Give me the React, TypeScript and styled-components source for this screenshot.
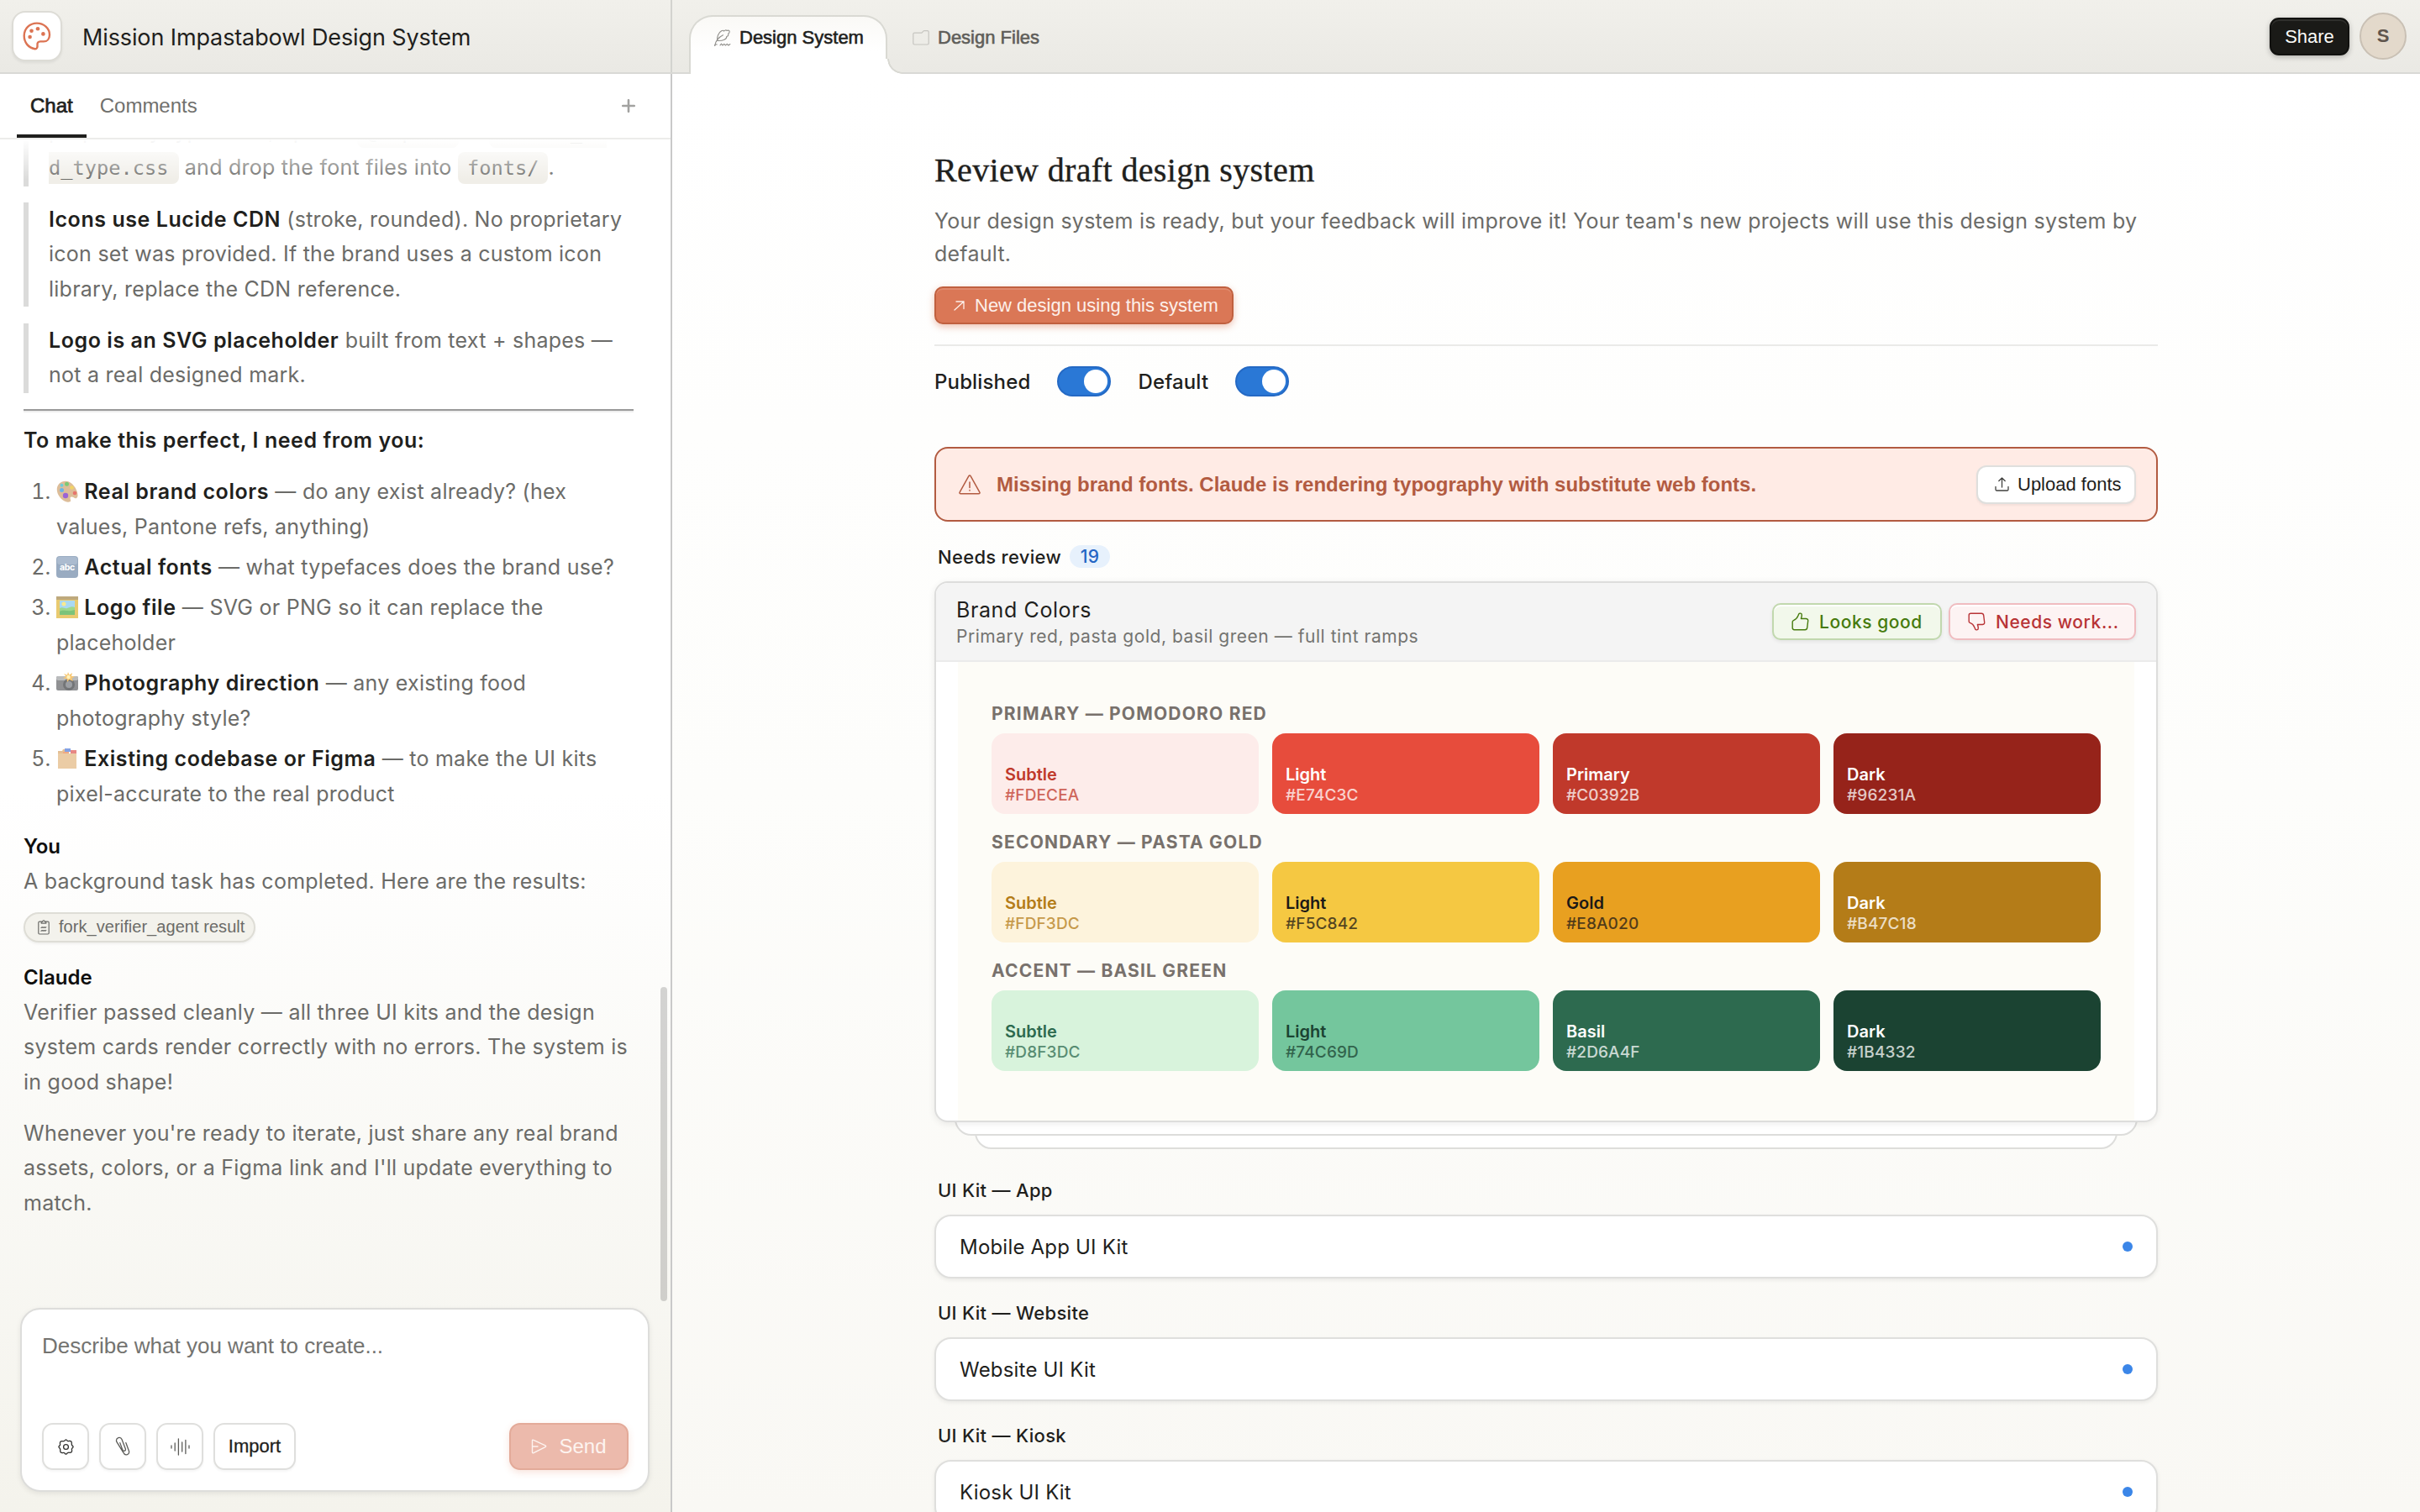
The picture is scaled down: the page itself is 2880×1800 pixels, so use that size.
import React from 'react';
import styled, { createGlobalStyle } from 'styled-components';

const brandRamps = [
  {
    label: 'PRIMARY — POMODORO RED',
    swatches: [
      { name: 'Subtle', hex: '#FDECEA', color: '#c0392b' },
      { name: 'Light', hex: '#E74C3C', color: '#ffffff' },
      { name: 'Primary', hex: '#C0392B', color: '#ffffff' },
      { name: 'Dark', hex: '#96231A', color: '#ffffff' },
    ],
  },
  {
    label: 'SECONDARY — PASTA GOLD',
    swatches: [
      { name: 'Subtle', hex: '#FDF3DC', color: '#b47c18' },
      { name: 'Light', hex: '#F5C842', color: '#1c1917' },
      { name: 'Gold', hex: '#E8A020', color: '#1c1917' },
      { name: 'Dark', hex: '#B47C18', color: '#ffffff' },
    ],
  },
  {
    label: 'ACCENT — BASIL GREEN',
    swatches: [
      { name: 'Subtle', hex: '#D8F3DC', color: '#2d6a4f' },
      { name: 'Light', hex: '#74C69D', color: '#1b4332' },
      { name: 'Basil', hex: '#2D6A4F', color: '#ffffff' },
      { name: 'Dark', hex: '#1B4332', color: '#ffffff' },
    ],
  },
];

const kits = [
  { section: 'UI Kit — App', name: 'Mobile App UI Kit' },
  { section: 'UI Kit — Website', name: 'Website UI Kit' },
  { section: 'UI Kit — Kiosk', name: 'Kiosk UI Kit' },
];

const PaletteIcon = () => (
  <svg width="34" height="34" viewBox="0 0 34 34" fill="none" stroke="#dc7453" strokeWidth="2.4" strokeLinejoin="round">
    <path d="M14.6 32.2C6.6 31 1.7 24.4 1.7 16.6 1.7 8 8.3 1.6 16.8 1.6c8.4 0 15.2 6.2 15.2 13.8 0 5-3 8-7 8h-4c-2.6 0-3.8 1.6-3.5 4 .3 2.9-.6 5-2.9 4.8z" />
    <g fill="#dc7453" stroke="none">
      <circle cx="8.6" cy="18" r="2.3" />
      <circle cx="10.5" cy="10.8" r="2.3" />
      <circle cx="18" cy="8.3" r="2.3" />
      <circle cx="24.4" cy="14.4" r="2.3" />
    </g>
  </svg>
);

const QuillIcon = () => (
  <svg width="20" height="20" viewBox="0 0 20 20" fill="none" stroke="#8f8e8a" strokeWidth="1.1" strokeLinecap="round" strokeLinejoin="round">
    <path d="M.6 19.4C1.6 14.5 5 9.5 10.5 6.8" />
    <path d="M3.8 13.4C2.8 9 5 3.8 9 1.6c1-.6 1.8-.6 2.4.5C12.6.9 14 .4 15 1.5c1.6-.9 3.3-.2 3.2 1.3-.1 1.4-.8 2-1.6 2.5.6 1.3 0 2.7-1.8 3.2C15 11.5 10.6 13.8 3.8 13.4z" />
    <path d="M.8 19.2c.6-1.6 1.6-1.7 2.4-1.2M7 18.8l1.5-1.6 1.4 1.8 1.9-1.7 1.5 1.7 2-1.7 1.6 1.7 2-1.5" />
  </svg>
);

const FolderIcon = () => (
  <svg width="20" height="18" viewBox="0 0 20 18" fill="none" stroke="#c6c5c0" strokeWidth="1.2" strokeLinejoin="round">
    <path d="M.8 4.6c0-.9.5-1.4 1.4-1.4H11L12.8 1.2c.3-.4.6-.5 1-.5h4c.9 0 1.4.5 1.4 1.4v13.5c0 .9-.5 1.4-1.4 1.4H2.2c-.9 0-1.4-.5-1.4-1.4z" />
  </svg>
);

const PlusIcon = () => (
  <svg width="16" height="16" viewBox="0 0 16 16" stroke="#a2a2a0" strokeWidth="2.6" strokeLinecap="round">
    <path d="M8 1.2v13.6M1.2 8h13.6" />
  </svg>
);

const ClipboardIcon = () => (
  <svg width="14" height="18" viewBox="0 0 14 18" fill="none" stroke="#6b6b68" strokeWidth="1.2" strokeLinejoin="round" strokeLinecap="round">
    <path d="M4.2 2.2H2C1.2 2.2.8 2.6.8 3.4v12.4c0 .8.4 1.2 1.2 1.2h10c.8 0 1.2-.4 1.2-1.2V3.4c0-.8-.4-1.2-1.2-1.2H9.8" />
    <path d="M4.2 4.2V2.4h1.4C5.7 1.3 6.2.8 7 .8s1.3.5 1.4 1.6h1.4v1.8z" />
    <path d="M4 9.5l1.2-.8 1 .8 1.3-.8 1 .8 1.3-.8M4 13.3l1.2-.8 1 .8 1.3-.8 1 .8 1.3-.8" />
  </svg>
);

const GearIcon = () => (
  <svg width="19" height="19" viewBox="0 0 19 19" fill="none" stroke="#30302e" strokeWidth="1.3" strokeLinejoin="round">
    <circle cx="9.5" cy="9.5" r="2.9" />
    <path d="M7.9 2.2Q9.5-.4 11.1 2.2Q12.3 3 13.5 2.4Q16.5 2.2 16.3 5.2Q16 6.5 16.8 7.9Q19.4 9.5 16.8 11.1Q16 12.3 16.6 13.5Q16.8 16.5 13.8 16.3Q12.5 16 11.1 16.8Q9.5 19.4 7.9 16.8Q6.7 16 5.5 16.6Q2.5 16.8 2.7 13.8Q3 12.5 2.2 11.1Q-.4 9.5 2.2 7.9Q3 6.7 2.4 5.5Q2.2 2.5 5.2 2.7Q6.5 3 7.9 2.2z" />
  </svg>
);

const ClipIcon = () => (
  <svg width="18" height="24" viewBox="0 0 18 24" fill="none" stroke="#5c5c59" strokeWidth="1.3" strokeLinecap="round">
    <path d="M12.8 7.6l3.5 9.3c1.7 4.6-4.6 7-6.4 2.4L1.7 6.2C.4 1.7 6.4-.4 8 3.6l4.3 11.2c.9 2.4-2.5 3.6-3.4 1.3L5.8 7.6" />
  </svg>
);

const WaveIcon = () => (
  <svg width="23" height="21" viewBox="0 0 23 21" stroke="#5c5c59" strokeWidth="1.3" strokeLinecap="round">
    <path d="M1 9v3M5.2 6v9M9.4 1v19M13.7 5v11M17.9 2.5v16M22 9v3" />
  </svg>
);

const SendIcon = () => (
  <svg width="19" height="18" viewBox="0 0 19 18" fill="none" stroke="#fdf4f0" strokeWidth="1.4" strokeLinejoin="round" strokeLinecap="round">
    <path d="M1.5 2.2c0-1 .7-1.3 1.5-.9l14 6.6c.9.5.9 1.2 0 1.7L3 16.7c-.8.4-1.5 0-1.5-.9zM1.8 9H8" />
  </svg>
);

const ArrowIcon = () => (
  <svg width="13" height="12" viewBox="0 0 13 12" fill="none" stroke="#fdf0ea" strokeWidth="1.3" strokeLinecap="round" strokeLinejoin="round">
    <path d="M1 11L12 1M3 1h9v8.5" />
  </svg>
);

const WarningIcon = () => (
  <svg width="26" height="24" viewBox="0 0 26 24" fill="none" stroke="#b25b41" strokeWidth="1.5" strokeLinecap="round" strokeLinejoin="round">
    <path d="M11.8 1.8c.6-1 1.8-1 2.4 0l10.6 19c.6 1 .1 1.9-1.1 1.9H2.3c-1.2 0-1.7-.9-1.1-1.9zM13 9v6.5M13 18.6v.3" />
  </svg>
);

const UploadIcon = () => (
  <svg width="17" height="17" viewBox="0 0 17 17" fill="none" stroke="#40403e" strokeWidth="1.3" strokeLinecap="round" strokeLinejoin="round">
    <path d="M8.5 12V1M4.8 4.5L8.5 1l3.7 3.5M1 11.5v3.2c0 .9.4 1.3 1.3 1.3h12.4c.9 0 1.3-.4 1.3-1.3v-3.2" />
  </svg>
);

const ThumbIcon = ({ flipped = false }: { flipped?: boolean }) => (
  <svg width="21" height="22" viewBox="0 0 21 22" fill="none" stroke="currentColor" strokeWidth="1.4" strokeLinejoin="round" strokeLinecap="round">
    <path
      transform={flipped ? 'matrix(1 0 0 -1 0 22)' : undefined}
      d="M1.2 11.2c0-.9.4-1.3 1.2-1.6 2.3-.8 4.3-2.7 5.4-5.3l.9-2.2c.6-1.3 3.7-1.6 3.6 1.2 0 1.5-.5 2.9-.9 4.2h5.8c1.7 0 2.7 1 2.5 2.5l-1 8.3c-.2 1.6-1 2.4-2.5 2.4H3.4c-1.5 0-2.2-.7-2.2-2.1z"
    />
  </svg>
);

const EmojiPalette = () => (
  <Emoji viewBox="0 0 26 26">
    <path d="M7 1.5c6-2.5 12 1 15.5 7 3.3 5.5 4 11 1.6 12.4-2.3 1.3-4.3-2.4-6.8-1.2-2.3 1.2 1.3 4.3-1 5.5C12 27 5.5 23 2.4 17-.8 10.7.8 4 7 1.5z" fill="#d2a877" />
    <circle cx="6.5" cy="11.5" r="2.5" fill="#3c9be0" />
    <circle cx="6.5" cy="5.8" r="2" fill="#3cbcd2" />
    <circle cx="12.5" cy="4.2" r="2.5" fill="#54b848" />
    <circle cx="18.5" cy="8.5" r="2.3" fill="#edc531" />
    <circle cx="22" cy="15" r="2.3" fill="#e0483e" />
    <circle cx="11" cy="18" r="3.2" fill="#7a2fc8" />
  </Emoji>
);

const EmojiAbc = () => (
  <Emoji viewBox="0 0 26 26">
    <rect x="0" y="0" width="26" height="26" rx="4" fill="#7890ad" />
    <rect x="1" y="1" width="24" height="9" rx="3" fill="#8fa5bf" />
    <text x="13" y="16.5" textAnchor="middle" fontSize="10.5" fontWeight="700" letterSpacing="-0.3" fontFamily="Inter, sans-serif" fill="#fff">
      abc
    </text>
  </Emoji>
);

const EmojiPicture = () => (
  <Emoji viewBox="0 0 26 26">
    <rect width="26" height="26" fill="#e2b93f" />
    <rect width="26" height="4" fill="#a98d52" />
    <rect x="4" y="5" width="18" height="17" fill="#8ecdf0" />
    <circle cx="9" cy="9" r="2.5" fill="#f7e36b" />
    <path d="M4 14c4-2 6 1 9 0s5-3 9-1v9H4z" fill="#7dcb67" />
    <path d="M4 18c5-3 9 1 18-2v6H4z" fill="#4faf4e" />
  </Emoji>
);

const EmojiCamera = () => (
  <Emoji viewBox="0 0 26 26">
    <rect x="0" y="5" width="26" height="17" rx="2" fill="#6b6d70" />
    <rect x="0" y="5" width="26" height="5" rx="2" fill="#a4a6a8" />
    <circle cx="15" cy="15" r="7" fill="#45474a" />
    <circle cx="15" cy="15" r="4" fill="#7c8085" />
    <path d="M14 0l1.5 3.5L19 1l-1 4 4 .5-3.5 2L20 11l-4.5-2L13 12l-.5-4L8 7.5l3.5-2.2L9 2l4 1.5z" fill="#f6b545" />
    <circle cx="14.5" cy="6" r="2.2" fill="#fff0a8" />
  </Emoji>
);

const EmojiDividers = () => (
  <Emoji viewBox="0 0 26 26">
    <path d="M2 4h5l1-2h3v5h13v17H2z" fill="#dcab72" />
    <path d="M10 1h7v4h-7z" fill="#5b84dc" />
    <path d="M17 3h7v4h-7z" fill="#e0605c" />
    <path d="M8 5h7v3H8z" fill="#e98d5b" />
    <path d="M2 7h22v18H2z" fill="#e5bb88" />
  </Emoji>
);

const App = () => {
  return (
    <Page>
      <GlobalStyle />
      <TopBar>
        <ProjectBar>
          <LogoButton>
            <PaletteIcon />
          </LogoButton>
          <ProjectName>Mission Impastabowl Design System</ProjectName>
        </ProjectBar>
        <FileTabs>
          <ActiveFileTab>
            <QuillIcon />
            Design System
          </ActiveFileTab>
          <FileTab>
            <FolderIcon />
            Design Files
          </FileTab>
        </FileTabs>
        <ShareButton>Share</ShareButton>
        <Avatar>S</Avatar>
      </TopBar>
      <Body>
        <Sidebar>
          <SidebarTabs>
            <SidebarTab $active>Chat</SidebarTab>
            <SidebarTab>Comments</SidebarTab>
            <AddButton>
              <PlusIcon />
            </AddButton>
          </SidebarTabs>
          <Messages>
            <Quote>
              proprietary typefaces, update <Code>@import</Code> in <Code $side="start">colors_an</Code>
              <br />
              <Code $side="end">d_type.css</Code> and drop the font files into <Code>fonts/</Code>.
            </Quote>
            <Quote>
              <Strong>Icons use Lucide CDN</Strong> (stroke, rounded). No proprietary
              <br />
              icon set was provided. If the brand uses a custom icon
              <br />
              library, replace the CDN reference.
            </Quote>
            <Quote>
              <Strong>Logo is an SVG placeholder</Strong> built from text + shapes —
              <br />
              not a real designed mark.
            </Quote>
            <Rule />
            <Paragraph>
              <Strong>To make this perfect, I need from you:</Strong>
            </Paragraph>
            <Requests>
              <li>
                <EmojiPalette /> <Strong>Real brand colors</Strong> — do any exist already? (hex
                <br />
                values, Pantone refs, anything)
              </li>
              <li>
                <EmojiAbc /> <Strong>Actual fonts</Strong> — what typefaces does the brand use?
              </li>
              <li>
                <EmojiPicture /> <Strong>Logo file</Strong> — SVG or PNG so it can replace the
                <br />
                placeholder
              </li>
              <li>
                <EmojiCamera /> <Strong>Photography direction</Strong> — any existing food
                <br />
                photography style?
              </li>
              <li>
                <EmojiDividers /> <Strong>Existing codebase or Figma</Strong> — to make the UI kits
                <br />
                pixel-accurate to the real product
              </li>
            </Requests>
            <Author>You</Author>
            <Paragraph>A background task has completed. Here are the results:</Paragraph>
            <ResultChip>
              <ClipboardIcon />
              fork_verifier_agent result
            </ResultChip>
            <Author>Claude</Author>
            <Paragraph>
              Verifier passed cleanly — all three UI kits and the design
              <br />
              system cards render correctly with no errors. The system is
              <br />
              in good shape!
            </Paragraph>
            <Paragraph $spaced>
              Whenever you're ready to iterate, just share any real brand
              <br />
              assets, colors, or a Figma link and I'll update everything to
              <br />
              match.
            </Paragraph>
            <TopFade />
            <ScrollThumb />
          </Messages>
          <Composer>
            <Placeholder>Describe what you want to create...</Placeholder>
            <ComposerActions>
              <ToolButton>
                <GearIcon />
              </ToolButton>
              <ToolButton>
                <ClipIcon />
              </ToolButton>
              <ToolButton>
                <WaveIcon />
              </ToolButton>
              <ImportButton>Import</ImportButton>
              <SendButton>
                <SendIcon />
                Send
              </SendButton>
            </ComposerActions>
          </Composer>
        </Sidebar>
        <Main>
          <Content>
            <Title>Review draft design system</Title>
            <Intro>
              Your design system is ready, but your feedback will improve it! Your team's new projects will use this design system by
              <br />
              default.
            </Intro>
            <NewDesignButton>
              <ArrowIcon />
              New design using this system
            </NewDesignButton>
            <Divider />
            <Toggles>
              <ToggleLabel>Published</ToggleLabel>
              <Toggle />
              <ToggleLabel>Default</ToggleLabel>
              <Toggle />
            </Toggles>
            <Alert>
              <WarningIcon />
              <AlertText>Missing brand fonts. Claude is rendering typography with substitute web fonts.</AlertText>
              <UploadButton>
                <UploadIcon />
                Upload fonts
              </UploadButton>
            </Alert>
            <ReviewHeading>
              Needs review
              <Count>19</Count>
            </ReviewHeading>
            <Stack>
              <ReviewCard>
                <CardHeader>
                  <div>
                    <CardTitle>Brand Colors</CardTitle>
                    <CardSubtitle>Primary red, pasta gold, basil green — full tint ramps</CardSubtitle>
                  </div>
                  <ReviewButtons>
                    <ReviewButton $tone="good">
                      <ThumbIcon />
                      Looks good
                    </ReviewButton>
                    <ReviewButton $tone="bad">
                      <ThumbIcon flipped />
                      Needs work...
                    </ReviewButton>
                  </ReviewButtons>
                </CardHeader>
                <Preview>
                  {brandRamps.map((ramp) => (
                    <Ramp key={ramp.label}>
                      <RampLabel>{ramp.label}</RampLabel>
                      <Swatches>
                        {ramp.swatches.map((swatch) => (
                          <Swatch key={swatch.hex} $bg={swatch.hex} $color={swatch.color}>
                            <SwatchName>{swatch.name}</SwatchName>
                            <SwatchHex>{swatch.hex}</SwatchHex>
                          </Swatch>
                        ))}
                      </Swatches>
                    </Ramp>
                  ))}
                </Preview>
              </ReviewCard>
              <StackLayer $inset={24} $depth={1} />
              <StackLayer $inset={48} $depth={2} />
            </Stack>
            {kits.map((kit) => (
              <Kit key={kit.name}>
                <KitSection>{kit.section}</KitSection>
                <KitCard>
                  {kit.name}
                  <Dot />
                </KitCard>
              </Kit>
            ))}
          </Content>
        </Main>
      </Body>
    </Page>
  );
};

export default App;

const GlobalStyle = createGlobalStyle`
  * {
    box-sizing: border-box;
  }
  body {
    margin: 0;
    overflow: hidden;
    font-family: Inter, 'Liberation Sans', sans-serif;
    color: #1f1f1d;
  }
  svg {
    flex-shrink: 0;
  }
  button {
    margin: 0;
    padding: 0;
    background: none;
    border: none;
  }
`;

const Page = styled.div`
  display: flex;
  flex-direction: column;
  width: 100vw;
  height: 100vh;
  overflow: hidden;
  white-space: nowrap;
`;

const TopBar = styled.header`
  display: flex;
  align-items: center;
  flex-shrink: 0;
  height: 88px;
  padding-right: 16px;
  border-bottom: 2px solid #d9d9d5;
  background: linear-gradient(to bottom, #f1f0eb, #eae9e4);
`;

const ProjectBar = styled.div`
  display: flex;
  align-items: center;
  width: 800px;
  height: 86px;
  padding-left: 14px;
  border-right: 2px solid #d3d3cf;
`;

const LogoButton = styled.button`
  display: flex;
  align-items: center;
  justify-content: center;
  width: 60px;
  height: 60px;
  border: 2px solid #dddcd6;
  border-radius: 16px;
  background: #fff;
  box-shadow: 0 2px 3px rgba(0, 0, 0, 0.06);
`;

const ProjectName = styled.div`
  margin: 2px 0 0 24px;
  font-size: 27px;
  letter-spacing: -0.12px;
`;

const FileTabs = styled.nav`
  display: flex;
  align-self: flex-end;
  flex: 1;
  height: 70px;
  margin: 0 0 -2px 20px;
`;

const FileTab = styled.div`
  display: flex;
  align-items: center;
  gap: 10px;
  height: 53px;
  padding-left: 30px;
  font-family: 'Liberation Sans', sans-serif;
  font-size: 22px;
  color: #5f5e5a;
  -webkit-text-stroke: 0.6px currentColor;
`;

const ActiveFileTab = styled(FileTab)`
  position: relative;
  width: 236px;
  height: 70px;
  padding: 0 0 18px 28px;
  border: 2px solid #d9d9d3;
  border-bottom: none;
  border-radius: 28px 28px 0 0;
  background: linear-gradient(to bottom, #faf9f6, #fff 60%);
  color: #1f1f1d;

  /* covers the side border so the corner below can curve outward */
  &::before {
    content: '';
    position: absolute;
    right: -2px;
    bottom: 0;
    width: 2px;
    height: 18px;
    background: #fff;
  }
  &::after {
    content: '';
    position: absolute;
    right: -20px;
    bottom: 0;
    width: 20px;
    height: 18px;
    background: radial-gradient(circle at 100% 0, #ebeae5 0, #ebeae5 15.5px, #d9d9d3 16px, #d9d9d3 17.5px, #fff 18px);
  }
`;

const ShareButton = styled.button`
  width: 95px;
  height: 45px;
  margin-right: 12px;
  padding-top: 2px;
  border: 2px solid #11110f;
  border-radius: 11px;
  background: #1a1a17;
  box-shadow: 0 2px 6px rgba(0, 0, 0, 0.25), inset 0 2px 0 #2f2f2c;
  font-family: 'Liberation Sans', sans-serif;
  font-size: 22px;
  color: #fafaf7;
`;

const Avatar = styled.div`
  display: flex;
  align-items: center;
  justify-content: center;
  width: 56px;
  height: 56px;
  border: 2px solid #c9c0b4;
  border-radius: 50%;
  background: #e3d9cb;
  font-family: 'Liberation Sans', sans-serif;
  font-size: 22px;
  font-weight: 700;
  color: #5f554d;
`;

const Body = styled.div`
  display: flex;
  flex: 1;
  min-height: 0;
`;

const Sidebar = styled.aside`
  display: flex;
  flex-direction: column;
  width: 800px;
  flex-shrink: 0;
  border-right: 2px solid #c9c9c9;
  background: linear-gradient(to bottom, #fff 0, #fff 50%, #f4f3ec 100%);
`;

const SidebarTabs = styled.div`
  display: flex;
  flex-shrink: 0;
  height: 78px;
  padding: 0 42px 0 20px;
  border-bottom: 2px solid #ececea;
`;

const SidebarTab = styled.div<{ $active?: boolean }>`
  display: flex;
  align-items: center;
  height: 76px;
  padding: 0 16px;
  font-family: 'Liberation Sans', sans-serif;
  font-size: 24px;
  color: ${({ $active }) => ($active ? '#1f1f1d' : '#70706d')};
  box-shadow: ${({ $active }) => ($active ? 'inset 0 -4px 0 #1f1f1d' : 'none')};
  -webkit-text-stroke: ${({ $active }) => ($active ? '0.7px currentColor' : '0')};
`;

const AddButton = styled.button`
  display: flex;
  align-items: center;
  margin-left: auto;
`;

const Messages = styled.div`
  position: relative;
  flex: 1;
  min-height: 0;
  padding-left: 28px;
  overflow: hidden;
  font-size: 25px;
  line-height: 41.6px;
  letter-spacing: 0.25px;
  color: #6b6b68;
`;

const Quote = styled.div`
  margin: 0 0 19.2px;
  padding-left: 24px;
  border-left: 6px solid #dbdbda;

  &:first-child {
    margin-top: -29.7px;
  }
`;

const Strong = styled.strong`
  font-weight: 600;
  letter-spacing: 0.56px;
  color: #1f1f1d;
`;

const Code = styled.code<{ $side?: 'start' | 'end' }>`
  padding: ${({ $side }) => ($side === 'end' ? '5px 12px 5px 0' : $side === 'start' ? '5px 0 5px 11px' : '5px 11px')};
  border-radius: ${({ $side }) => ($side === 'end' ? '0 8px 8px 0' : $side === 'start' ? '8px 0 0 8px' : '8px')};
  background: #f0eee8;
  font-family: 'DejaVu Sans Mono', 'Liberation Mono', monospace;
  font-size: 23.6px;
  letter-spacing: 0.05px;
`;

const Rule = styled.div`
  width: 726px;
  height: 4px;
  margin: 0 0 13px;
  border-top: 2px solid #9a9a9a;
  border-bottom: 2px solid #eeeeee;
`;

const Paragraph = styled.p<{ $spaced?: boolean }>`
  margin: ${({ $spaced }) => ($spaced ? '19.2px 0 0' : '0')};
`;

const Requests = styled.ol`
  display: flex;
  flex-direction: column;
  gap: 6.7px;
  margin: 19.4px 0 0;
  padding-left: 39px;

  li::marker {
    letter-spacing: 0;
  }
`;

const Emoji = styled.svg`
  width: 26px;
  height: 26px;
  vertical-align: -4px;
  opacity: 0.75;
`;

const Author = styled.div`
  margin: 27px 0 6px;
  font-size: 24px;
  font-weight: 600;
  line-height: 30px;
  letter-spacing: 0;
  color: #0f0f0e;
`;

const ResultChip = styled.div`
  display: flex;
  align-items: center;
  gap: 11px;
  width: 276px;
  height: 36px;
  margin-top: 15px;
  padding-left: 15px;
  border: 2px solid #deddd6;
  border-radius: 18px;
  background: #f3f2ec;
  box-shadow: 0 2px 3px rgba(0, 0, 0, 0.05);
  font-family: 'Liberation Sans', sans-serif;
  font-size: 20px;
  letter-spacing: 0.05px;
`;

const TopFade = styled.div`
  position: absolute;
  top: 0;
  left: 0;
  width: 780px;
  height: 48px;
  background: linear-gradient(to bottom, #fff, rgba(255, 255, 255, 0));
`;

const ScrollThumb = styled.div`
  position: absolute;
  top: 1009px;
  right: 4px;
  width: 8px;
  height: 374px;
  border-radius: 4px;
  background: rgba(0, 0, 0, 0.16);
`;

const Composer = styled.div`
  display: flex;
  flex-direction: column;
  justify-content: space-between;
  flex-shrink: 0;
  width: 749px;
  height: 219px;
  margin: 4px 0 24px 24px;
  padding: 26px 23px 24px 24px;
  border: 2px solid #dddddb;
  border-radius: 24px;
  background: #fff;
  box-shadow: 0 2px 6px rgba(0, 0, 0, 0.08);
`;

const Placeholder = styled.div`
  font-family: 'Liberation Sans', sans-serif;
  font-size: 26px;
  line-height: 34px;
  color: #737370;
`;

const ComposerActions = styled.div`
  display: flex;
  gap: 12px;
`;

const ToolButton = styled.button`
  display: flex;
  align-items: center;
  justify-content: center;
  width: 56px;
  height: 56px;
  border: 2px solid #dfdfdd;
  border-radius: 13px;
  background: #fff;
  box-shadow: 0 2px 3px rgba(0, 0, 0, 0.04);
`;

const ImportButton = styled(ToolButton)`
  width: 98px;
  font-family: 'Liberation Sans', sans-serif;
  font-size: 22px;
  color: #1f1f1d;
  -webkit-text-stroke: 0.3px currentColor;
`;

const SendButton = styled(ToolButton)`
  gap: 14px;
  width: 142px;
  margin-left: auto;
  border-color: #e3aa99;
  background: #ecbaac;
  box-shadow: 0 3px 8px rgba(218, 119, 86, 0.2);
  font-family: 'Liberation Sans', sans-serif;
  font-size: 24px;
  color: #fdf4f0;
`;

const Main = styled.main`
  flex: 1;
  padding: 91px 0 0 312px;
  overflow: hidden;
  background: linear-gradient(to bottom, #fff 0, #fdfdfb 50%, #f9f8f4 100%);
`;

const Content = styled.div`
  width: 1456px;
`;

const Title = styled.h1`
  margin: 0;
  font-family: 'Liberation Serif', serif;
  font-size: 40px;
  font-weight: 400;
  line-height: 48px;
  letter-spacing: 0.36px;
  -webkit-text-stroke: 0.4px currentColor;
`;

const Intro = styled.p`
  margin: 17px 0 0;
  font-size: 25px;
  line-height: 39.2px;
  letter-spacing: 0.24px;
  color: #6b6b68;
`;

const NewDesignButton = styled.button`
  display: flex;
  align-items: center;
  gap: 12px;
  width: 356px;
  height: 45px;
  margin-top: 18.6px;
  padding-left: 21px;
  border: 2px solid #c0603f;
  border-radius: 10px;
  background: #da7756;
  box-shadow: 0 3px 8px rgba(218, 119, 86, 0.45), inset 0 2px 0 #e08a6d;
  font-family: 'Liberation Sans', sans-serif;
  font-size: 22px;
  color: #fdf0ea;
`;

const Divider = styled.div`
  height: 2px;
  margin: 24px 0;
  background: #eaeae8;
`;

const Toggles = styled.div`
  display: flex;
  align-items: center;
  gap: 32px;
  height: 36px;
`;

const ToggleLabel = styled.span`
  font-size: 24px;
  font-weight: 500;
  letter-spacing: 0.15px;
`;

const Toggle = styled.span`
  display: flex;
  justify-content: flex-end;
  width: 64px;
  height: 36px;
  padding: 2px;
  border: 2px solid #2469c4;
  border-radius: 18px;
  background: #2a78d6;

  &::before {
    content: '';
    width: 28px;
    height: 28px;
    border-radius: 50%;
    background: #fff;
  }
`;

const Alert = styled.div`
  display: flex;
  align-items: center;
  height: 89px;
  margin-top: 60px;
  padding: 0 24px 0 27px;
  border: 2px solid #b25b41;
  border-radius: 16px;
  background: #ffebe5;
`;

const AlertText = styled.div`
  flex: 1;
  margin-left: 19px;
  font-family: 'Liberation Sans', sans-serif;
  font-size: 24px;
  font-weight: 700;
  color: #b25b41;
`;

const UploadButton = styled.button`
  display: flex;
  align-items: center;
  gap: 10px;
  width: 190px;
  height: 46px;
  padding-left: 20px;
  border: 2px solid #dfdfdd;
  border-radius: 12px;
  background: #fff;
  box-shadow: 0 2px 3px rgba(0, 0, 0, 0.05);
  font-family: 'Liberation Sans', sans-serif;
  font-size: 22px;
  color: #1f1f1d;
`;

const ReviewHeading = styled.div`
  display: flex;
  align-items: center;
  gap: 10px;
  height: 27px;
  margin: 28px 0 16px;
  padding-left: 4px;
  font-size: 22px;
  font-weight: 500;
  letter-spacing: 0.3px;
`;

const Count = styled.span`
  display: flex;
  align-items: center;
  justify-content: center;
  width: 48px;
  height: 27px;
  border-radius: 14px;
  background: #e7f1fc;
  font-size: 21px;
  color: #2566c4;
`;

const Stack = styled.section`
  position: relative;
  isolation: isolate;
`;

const ReviewCard = styled.div`
  height: 644px;
  border: 2px solid #dddddc;
  border-radius: 16px;
  overflow: hidden;
  background: #fff;
  box-shadow: 0 2px 8px rgba(0, 0, 0, 0.08);
`;

const StackLayer = styled.div<{ $inset: number; $depth: number }>`
  position: relative;
  z-index: ${({ $depth }) => -$depth};
  height: 46px;
  margin: -30px ${({ $inset }) => $inset}px 0;
  border: 2px solid #dddddb;
  border-radius: 20px;
  background: #fff;
`;

const CardHeader = styled.div`
  display: flex;
  align-items: center;
  justify-content: space-between;
  height: 94px;
  padding: 0 24px;
  border-bottom: 2px solid #ebebeb;
  background: #f4f4f4;
`;

const CardTitle = styled.div`
  font-size: 25px;
  line-height: 34px;
  letter-spacing: 0.6px;
`;

const CardSubtitle = styled.div`
  margin-top: 1px;
  font-size: 21px;
  line-height: 28px;
  letter-spacing: 0.54px;
  color: #737370;
`;

const ReviewButtons = styled.div`
  display: flex;
  gap: 8px;
`;

const ReviewButton = styled.button<{ $tone: 'good' | 'bad' }>`
  display: flex;
  align-items: center;
  gap: 12px;
  width: ${({ $tone }) => ($tone === 'good' ? '202px' : '223px')};
  height: 44px;
  padding-left: 21px;
  border: 2px solid ${({ $tone }) => ($tone === 'good' ? '#c1d8ae' : '#f0bcc0')};
  border-radius: 10px;
  background: ${({ $tone }) => ($tone === 'good' ? '#f2f8eb' : '#fdf3f3')};
  box-shadow: 0 2px 4px rgba(0, 0, 0, 0.07), inset 0 2px 0 #fff;
  font-family: Inter, sans-serif;
  font-size: 21px;
  font-weight: 500;
  letter-spacing: 0.55px;
  color: ${({ $tone }) => ($tone === 'good' ? '#467b0e' : '#b83336')};
`;

const Preview = styled.div`
  height: 546px;
  margin: 0 26px;
  padding: 44px 40px 0;
  background: #fdfcf7;
`;

const Ramp = styled.div`
  margin-bottom: 16px;
`;

const RampLabel = styled.div`
  height: 41px;
  font-size: 21px;
  font-weight: 700;
  line-height: 36px;
  letter-spacing: 1.2px;
  color: #78716c;
`;

const Swatches = styled.div`
  display: grid;
  grid-template-columns: repeat(4, 1fr);
  gap: 16px;
`;

const Swatch = styled.div<{ $bg: string; $color: string }>`
  display: flex;
  flex-direction: column;
  justify-content: flex-end;
  height: 96px;
  padding: 0 16px 10px;
  border-radius: 16px;
  background: ${({ $bg }) => $bg};
  color: ${({ $color }) => $color};
`;

const SwatchName = styled.div`
  font-size: 20px;
  font-weight: 600;
  line-height: 25px;
`;

const SwatchHex = styled.div`
  font-size: 19px;
  font-weight: 500;
  line-height: 24px;
  letter-spacing: 0.15px;
  opacity: 0.75;
`;

const Kit = styled.section`
  padding-top: 27px;

  ${Stack} + & {
    padding-top: 35px;
  }
`;

const KitSection = styled.div`
  padding-left: 4px;
  font-size: 22px;
  font-weight: 500;
  line-height: 28px;
  letter-spacing: 0.3px;
`;

const KitCard = styled.div`
  display: flex;
  align-items: center;
  justify-content: space-between;
  height: 76px;
  margin-top: 15px;
  padding: 0 28px;
  border: 2px solid #dfdfdd;
  border-radius: 20px;
  background: #fff;
  box-shadow: 0 2px 5px rgba(0, 0, 0, 0.07);
  font-size: 24px;
  letter-spacing: 0.2px;
`;

const Dot = styled.span`
  width: 12px;
  height: 12px;
  border-radius: 50%;
  background: #3b86e8;
`;
